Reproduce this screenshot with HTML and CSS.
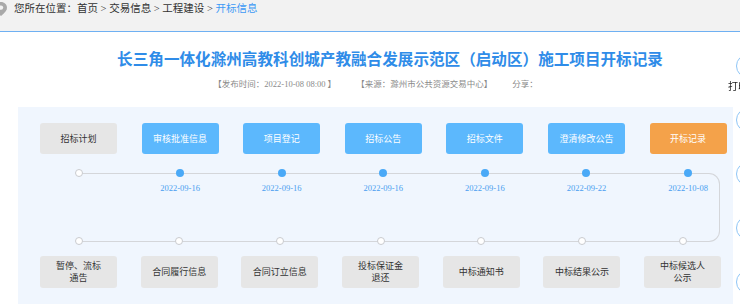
FILE: index.html
```html
<!DOCTYPE html>
<html lang="zh-CN">
<head>
  <meta charset="UTF-8" />
  <meta name="viewport" content="width=device-width, initial-scale=1.0" />
  <title>开标信息</title>
  <link rel="stylesheet" href="styles.css">
</head>
<body>
  <div class="crumbs">
    <svg class="pin" width="12" height="14" viewBox="0 0 12 14">
      <path d="M6 0C2.7 0 0 2.6 0 5.8 0 9.6 6 14 6 14s6-4.4 6-8.2C12 2.6 9.3 0 6 0z" fill="#a9a9a9"/>
      <circle cx="6" cy="5.6" r="2.2" fill="#f2f2f2"/>
    </svg>
    <span>您所在位置：首页 &gt; 交易信息 &gt; 工程建设 &gt; <a class="current">开标信息</a></span>
  </div>

  <h1 class="title">长三角一体化滁州高教科创城产教融合发展示范区（启动区）施工项目开标记录</h1>
  <div class="meta">
    <span>【发布时间：2022-10-08 08:00 】</span>
    <span>【来源：滁州市公共资源交易中心】</span>
    <span>分享：</span>
    <span class="share"></span>
  </div>

  <div class="panel">
    <div class="track"></div>
    <div class="row top">
      <div class="step"><div class="box gray">招标计划</div><i class="dot off"></i><span class="date">&nbsp;</span></div>
      <div class="step"><div class="box blue">审核批准信息</div><i class="dot"></i><span class="date">2022-09-16</span></div>
      <div class="step"><div class="box blue">项目登记</div><i class="dot"></i><span class="date">2022-09-16</span></div>
      <div class="step"><div class="box blue">招标公告</div><i class="dot"></i><span class="date">2022-09-16</span></div>
      <div class="step"><div class="box blue">招标文件</div><i class="dot"></i><span class="date">2022-09-16</span></div>
      <div class="step"><div class="box blue">澄清修改公告</div><i class="dot"></i><span class="date">2022-09-22</span></div>
      <div class="step"><div class="box orange">开标记录</div><i class="dot"></i><span class="date">2022-10-08</span></div>
    </div>
    <div class="row bottom">
      <div class="step"><i class="dot off"></i><div class="box gray">暂停、流标<br>通告</div></div>
      <div class="step"><i class="dot off"></i><div class="box gray">合同履行信息</div></div>
      <div class="step"><i class="dot off"></i><div class="box gray">合同订立信息</div></div>
      <div class="step"><i class="dot off"></i><div class="box gray">投标保证金<br>退还</div></div>
      <div class="step"><i class="dot off"></i><div class="box gray">中标通知书</div></div>
      <div class="step"><i class="dot off"></i><div class="box gray">中标结果公示</div></div>
      <div class="step"><i class="dot off"></i><div class="box gray">中标候选人<br>公示</div></div>
    </div>
  </div>

  <div class="sidebar">
    <div class="tool"><span class="ring"></span><span class="label">打印本页</span></div>
    <div class="tool"><span class="ring"></span></div>
    <div class="tool"><span class="ring"></span></div>
    <div class="tool"><span class="ring"></span></div>
    <div class="tool"><span class="ring"></span></div>
  </div>
</body>
</html>
```
FILE: styles.css
```css
body {
  margin: 0;
  background: #fff;
  color: #333;
  font-family: "Liberation Serif", "Noto Sans CJK SC", serif;
  overflow: hidden;
}
.crumbs {
  height: 29px;
  background: #f2f2f2;
  border-bottom: 1px solid #6fb0f2;
  display: flex;
  align-items: flex-start;
  gap: 7px;
  padding-top: 2px;
  box-sizing: content-box;
  font-size: 10.5px;
  line-height: 14px;
  color: #333;
}
.crumbs .pin {
  margin-left: -5px;
  margin-top: 0;
}
.crumbs .current {
  color: #3d99f5;
}
.crumbs + .title {
  margin-top: 15.5px;
}
.title {
  margin-bottom: 0;
  padding-left: 40px;
  text-align: center;
  font-family: "Noto Sans CJK SC", sans-serif;
  font-size: 15.6px;
  line-height: 20px;
  font-weight: 700;
  color: #2f8ce8;
  letter-spacing: 0;
}
.meta {
  margin-top: 10px;
  padding-left: 40px;
  display: flex;
  justify-content: center;
  gap: 20px;
  font-size: 8.5px;
  line-height: 12px;
  color: #8a8a8a;
}
.meta .share {
  width: 9px;
}
.panel {
  position: relative;
  margin: 17.5px 7px 0 18px;
  padding: 16px 0 30px 22px;
  background: #f0f6fe;
}
.track {
  position: absolute;
  left: 60px;
  top: 66px;
  width: 642px;
  height: 69px;
  box-sizing: border-box;
  border: 1px solid #d4d6da;
  border-left: none;
  border-radius: 0 11px 11px 0;
}
.row {
  position: relative;
  display: grid;
  grid-template-columns: repeat(7, 77px);
}
.row.top {
  column-gap: 24.6px;
}
.row.bottom {
  margin-top: 43px;
  column-gap: 23.7px;
}
.step {
  display: flex;
  flex-direction: column;
  align-items: center;
}
.box {
  width: 77px;
  height: 31px;
  border-radius: 3px;
  display: flex;
  align-items: center;
  justify-content: center;
  text-align: center;
  font-family: "Noto Sans CJK SC", sans-serif;
  font-size: 9px;
  line-height: 12px;
}
.bottom .box {
  height: 32px;
}
.gray {
  background: #e6e6e6;
  color: #333;
}
.blue {
  background: #5cb8fd;
  color: #fff;
}
.orange {
  background: #f4a24a;
  color: #fff;
}
.dot {
  display: block;
  width: 8px;
  height: 8px;
  border-radius: 50%;
  background: #4aa9f7;
  box-sizing: border-box;
}
.dot.off {
  background: #fff;
  border: 1px solid #c9cbcf;
}
.top .dot {
  margin-top: 15px;
}
.bottom .dot {
  margin-bottom: 11px;
}
.date {
  margin-top: 5px;
  font-size: 8.5px;
  line-height: 12px;
  color: #4a9ef0;
}
.sidebar {
  position: fixed;
  top: 54px;
  left: 726px;
  width: 44px;
  display: flex;
  flex-direction: column;
}
.tool {
  height: 54px;
  display: flex;
  flex-direction: column;
  align-items: center;
}
.ring {
  width: 24px;
  height: 24px;
  box-sizing: border-box;
  border: 1.5px solid #8ec5f6;
  border-radius: 50%;
  background: #fff;
}
.label {
  margin-top: 2px;
  font-family: "Noto Sans CJK SC", sans-serif;
  font-size: 10px;
  line-height: 12px;
  color: #222;
  white-space: nowrap;
}
```
